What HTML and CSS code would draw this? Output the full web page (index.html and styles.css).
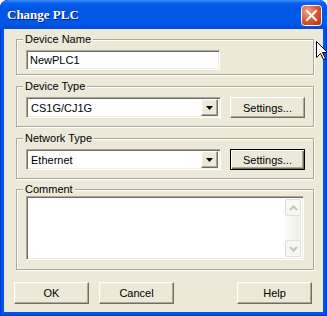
FILE: index.html
```html
<!DOCTYPE html>
<html>
  <head>
    <meta charset="utf-8">
    <title>Change PLC</title>
    <link rel="stylesheet" href="styles.css">
  </head>
  <body>
    <div class="window">
      <div class="titleBar">
        <span class="title">Change PLC</span>
        <span class="closeBtn">
          <svg width="21" height="21" viewBox="0 0 21 21">
            <defs>
              <radialGradient id="closeGrad" cx="0.3" cy="0.3" r="0.8">
                <stop offset="0" stop-color="#f2a489"/>
                <stop offset="0.55" stop-color="#dc5b37"/>
                <stop offset="1" stop-color="#c03a16"/>
              </radialGradient>
            </defs>
            <rect x="0.5" y="0.5" width="20" height="20" rx="3" fill="url(#closeGrad)" stroke="#fff"/>
            <path d="M6 6 L15 15 M15 6 L6 15" stroke="#fff" stroke-width="2" stroke-linecap="square"/>
          </svg>
        </span>
      </div>
      <div class="client">
        <fieldset class="group groupName">
          <legend>Device Name</legend>
          <div class="edit nameEdit">NewPLC1</div>
        </fieldset>
        <fieldset class="group groupType">
          <legend>Device Type</legend>
          <div class="row">
            <div class="combo">
              <span class="comboText">CS1G/CJ1G</span>
              <span class="comboBtn"><svg width="7" height="4" viewBox="0 0 7 4"><path d="M0 0 H7 L3.5 4 Z" fill="#000"/></svg></span>
            </div>
            <div class="button">Settings...</div>
          </div>
        </fieldset>
        <fieldset class="group groupNet">
          <legend>Network Type</legend>
          <div class="row">
            <div class="combo">
              <span class="comboText">Ethernet</span>
              <span class="comboBtn"><svg width="7" height="4" viewBox="0 0 7 4"><path d="M0 0 H7 L3.5 4 Z" fill="#000"/></svg></span>
            </div>
            <div class="button defaultBtn">Settings...</div>
          </div>
        </fieldset>
        <fieldset class="group groupComment">
          <legend>Comment</legend>
          <div class="memo">
            <div class="scrollBar">
              <span class="scrollBtn"><svg width="9" height="6" viewBox="0 0 9 6"><path d="M1 5 L4.5 1.5 L8 5" fill="none" stroke="#c3c3bb" stroke-width="2"/></svg></span>
              <span class="scrollBtn"><svg width="9" height="6" viewBox="0 0 9 6"><path d="M1 1 L4.5 4.5 L8 1" fill="none" stroke="#c3c3bb" stroke-width="2"/></svg></span>
            </div>
          </div>
        </fieldset>
        <div class="buttons">
          <div class="button bigBtn">OK</div>
          <div class="button bigBtn">Cancel</div>
          <div class="button bigBtn helpBtn">Help</div>
        </div>
      </div>
      <svg class="cursor" width="12" height="19" viewBox="0 0 12 19">
        <path d="M0.5 0.5 L0.5 16.5 L4.5 12.5 L7.5 18.5 L9.5 17.5 L6.5 11.5 L11.5 11.5 Z" fill="#fff" stroke="#000"/>
      </svg>
    </div>
  </body>
</html>
```

FILE: styles.css
```css
body {
  margin: 0;
  background: #fff;
  font-family: "Liberation Sans", Arial, sans-serif;
  font-size: 11px;
  color: #000;
}

.window {
  position: relative;
  width: 327px;
  height: 316px;
  box-sizing: border-box;
  display: flex;
  flex-direction: column;
  padding: 0 4px 4px;
  background: #0055e5;
  border-radius: 8px 8px 0 0;
  box-shadow: inset 0 0 0 1px #0831d9;
  overflow: hidden;
}

.titleBar {
  display: flex;
  align-items: center;
  height: 29px;
  margin: 0 -4px;
  padding: 0 5px 0 7px;
  border-radius: 8px 8px 0 0;
  background: linear-gradient(#3d8ff6 0, #0a61ef 3px, #0055e5 8px, #0058ea 22px, #004ddc 29px);
}

.title {
  flex: 1;
  color: #fff;
  font: bold 13px "Liberation Serif", serif;
  text-shadow: 1px 1px #0a1883;
}

.closeBtn {
  width: 21px;
  height: 21px;
  margin-top: 2px;
}

.client {
  flex: 1;
  display: flex;
  flex-direction: column;
  padding: 4px 9px 0 10px;
  background: #ece9d8;
}

.group {
  margin: 0 0 0 2px;
  padding: 4px 8px 8px 9px;
  border: 1px solid #aca899;
  box-shadow: 1px 1px 0 #fff, inset 1px 1px 0 #fff;
  min-width: 0;
}

.group legend {
  margin-left: -3px;
  padding: 0 2px;
  line-height: 13px;
  background: #ece9d8;
}

.groupName {
  padding-bottom: 4px;
}

.groupType,
.groupNet {
  margin-top: 5px;
}

.groupComment {
  margin-top: 4px;
  padding-top: 0;
  padding-bottom: 9px;
}

.edit,
.combo,
.memo {
  box-sizing: border-box;
  background: #fff;
  border: 1px solid;
  border-color: #aca899 #fff #fff #aca899;
  box-shadow: inset 1px 1px 0 #716f64, inset -1px -1px 0 #f1efe2;
}

.edit {
  width: 194px;
  height: 20px;
  padding: 0 3px;
  line-height: 18px;
}

.row {
  display: flex;
  align-items: center;
  gap: 9px;
}

.combo {
  display: flex;
  align-items: center;
  width: 195px;
  height: 21px;
  padding: 2px;
}

.comboText {
  flex: 1;
  padding-left: 2px;
}

.comboBtn,
.button {
  box-sizing: border-box;
  display: flex;
  align-items: center;
  justify-content: center;
  background: #ece9d8;
  border: 1px solid;
  border-color: #fff #716f64 #716f64 #fff;
  box-shadow: inset -1px -1px 0 #aca899, inset 1px 1px 0 #f1efe2;
}

.comboBtn {
  width: 17px;
  height: 17px;
}

.button {
  width: 75px;
  height: 21px;
}

.defaultBtn {
  border-color: #000;
  box-shadow: inset 1px 1px 0 #fff, inset -1px -1px 0 #716f64, inset -2px -2px 0 #aca899;
}

.memo {
  display: flex;
  justify-content: flex-end;
  width: 278px;
  height: 64px;
  padding: 2px;
}

.scrollBar {
  display: flex;
  flex-direction: column;
  justify-content: space-between;
  width: 16px;
  background: linear-gradient(to right, #fbfbf9, #eeede5);
}

.scrollBtn {
  box-sizing: border-box;
  display: flex;
  align-items: center;
  justify-content: center;
  height: 17px;
  background: #f7f7f3;
  border: 1px solid #e2e1da;
  border-radius: 2px;
}

.buttons {
  display: flex;
  gap: 10px;
  margin-top: 12px;
}

.bigBtn {
  height: 22px;
}

.helpBtn {
  margin: 0 2px 0 auto;
}

.cursor {
  position: absolute;
  left: 316px;
  top: 41px;
}
```
